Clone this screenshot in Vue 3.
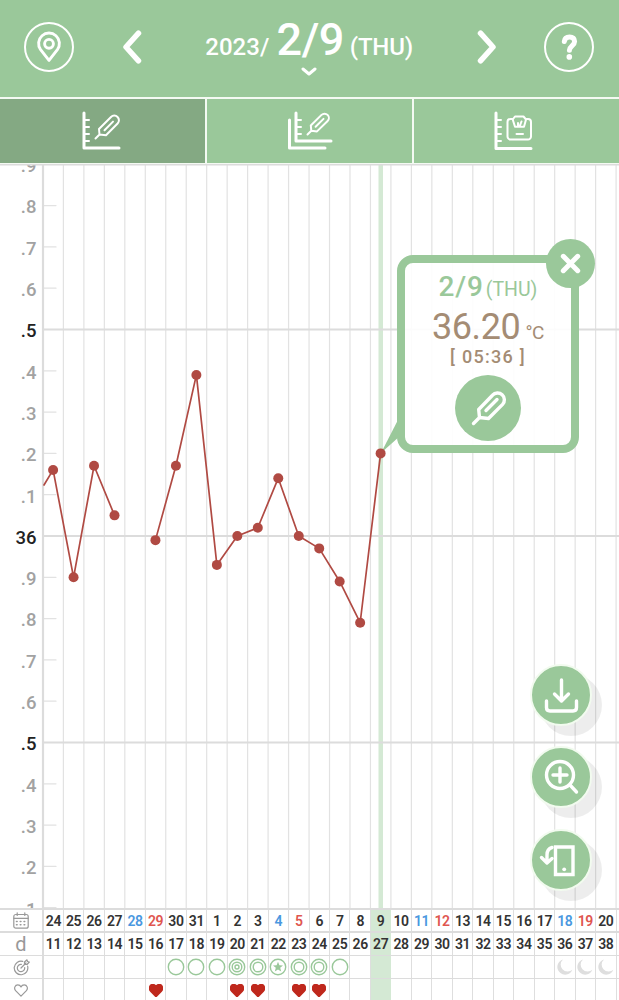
<template>
  <div class="app">
    <header class="header">
      <button class="round-btn">
        <svg width="50" height="50" viewBox="0 0 50 50">
          <circle cx="25" cy="25" r="24" />
          <path class="thick" d="M25 38.4 L16.6 27.6 A10.4 10.4 0 1 1 33.4 27.6 Z" />
          <circle class="thick" cx="25" cy="21.8" r="4.4" />
        </svg>
      </button>
      <button class="arrow">
        <svg width="20" height="34" viewBox="0 0 20 34"><path d="M16.5 3.2 L4 17 L16.5 30.8" /></svg>
      </button>
      <div class="date">
        <div class="date-text">
          <span class="year">2023/</span><span class="day">2/9</span><span class="week">(THU)</span>
        </div>
        <svg class="chevron" width="16" height="9" viewBox="0 0 16 9"><path d="M2 2 L8 7 L14 2" /></svg>
      </div>
      <button class="arrow">
        <svg width="20" height="34" viewBox="0 0 20 34"><path d="M3.5 3.2 L16 17 L3.5 30.8" /></svg>
      </button>
      <button class="round-btn">
        <svg width="50" height="50" viewBox="0 0 50 50">
          <circle cx="25" cy="25" r="24" />
          <path class="mark" d="M20.3 19.4 C20.6 16.3 22.8 14.9 25.6 14.9 C28.8 14.9 30.6 16.8 30.6 19.4 C30.6 23.6 25.4 24 25.4 28.2" />
          <circle class="dot" cx="25.3" cy="34.9" r="2.8" />
        </svg>
      </button>
    </header>

    <nav class="tabs">
      <button
        v-for="tab in tabs"
        :key="tab"
        class="tab"
        :class="[tab, { active: tab === activeTab }]"
        @click="activeTab = tab"
      >
        <svg v-if="tab === 'temp'" width="42" height="42" viewBox="0 0 42 42">
          <path class="axis" d="M4 3 V38 H39" />
          <path d="M5 10 H9 M5 17 H9 M5 24 H9 M5 31 H9" />
          <path d="M15.5 28.5 L19.5 24.5 L19 19 L31 7 A4.6 4.6 0 0 1 37.6 13.5 L26 25.2 L19.5 24.5 M24.5 20.2 L33 11.6" />
        </svg>
        <svg v-else-if="tab === 'multi'" width="46" height="42" viewBox="0 0 46 42">
          <path class="axis" d="M2.5 10 V38 H38" />
          <path class="axis" d="M9 3 V31 H44" />
          <path d="M10 10 H14 M10 17 H14 M10 24 H14" />
          <path d="M20.5 24.5 L24.3 20.7 L23.8 15.5 L34.5 4.9 A4.3 4.3 0 0 1 40.6 11 L30 21.4 L24.3 20.7 M28.6 16.7 L36.5 8.9" />
        </svg>
        <svg v-else width="42" height="42" viewBox="0 0 42 42">
          <path class="axis" d="M4 3 V38.5 H39" />
          <path d="M5 10 H9 M5 17 H9 M5 24 H9 M5 31 H9" />
          <path d="M20.5 9 H18.5 A3 3 0 0 0 15.5 12 V26.5 A3 3 0 0 0 18.5 29.5 H36 A3 3 0 0 0 39 26.5 V12 A3 3 0 0 0 36 9 H34" />
          <path d="M23 6.5 H31.5 L34 9.5 L32 16.8 H23 L20.7 9.5 Z M26 16 V13 M27.8 15.8 L29.5 11.5 M24.5 24 H31" />
        </svg>
      </button>
    </nav>

    <main class="chart">
      <svg width="619" height="745" viewBox="0 164 619 745">
        <rect class="today" x="378.5" y="164" width="4.5" height="745" />
        <line v-for="(d, i) in days" :key="'v' + i" class="grid" :x1="colX(i) + 10.3" :x2="colX(i) + 10.3" y1="164" y2="909" />
        <template v-for="s in scale" :key="s.y">
          <line :class="s.major ? 'grid-major' : 'grid'" x1="44" :x2="s.major ? 619 : 56" :y1="s.y" :y2="s.y" />
          <text class="label" :class="{ major: s.major }" x="36.5" :y="s.y + 7.8">{{ s.text }}</text>
        </template>
        <line class="axis-line" x1="43" x2="43" y1="164" y2="909" />
        <line class="grid-major" x1="0" x2="619" y1="164.3" y2="164.3" />
        <polyline v-for="(line, i) in lines" :key="'l' + i" class="temp-line" :points="line" />
        <path class="tail" d="M381 453 L400 416 V436 Z" />
        <circle v-for="p in points" :key="p.x" class="temp-dot" :cx="p.x" :cy="p.y" r="5" />
      </svg>

      <section v-if="showPopup" class="popup">
        <div class="popup-date">2/9<small>(THU)</small></div>
        <div class="popup-temp">36.20<small>°C</small></div>
        <div class="popup-time">[ 05:36 ]</div>
        <button class="popup-edit">
          <svg width="66" height="66" viewBox="0 0 66 66">
            <path d="M18.5 48.5 L24.5 42.5 L23.7 34.5 L37.5 20.2 A6.6 6.6 0 0 1 47.6 29.4 L33.5 43.5 L24.5 42.5 M31 35.5 L42 24.5" />
          </svg>
        </button>
        <button class="popup-close" @click="showPopup = false">
          <svg width="49" height="49" viewBox="0 0 49 49"><path d="M17.3 17.3 L31.7 31.7 M31.7 17.3 L17.3 31.7" /></svg>
        </button>
      </section>

      <div class="fabs">
        <button class="fab">
          <svg width="60" height="60" viewBox="0 0 60 60">
            <path d="M30.5 15 V35.5 M23.5 29 L30.5 36 L37.5 29 M15.5 36 V42.5 Q15.5 46 19 46 H42 Q45.5 46 45.5 42.5 V36" />
          </svg>
        </button>
        <button class="fab">
          <svg width="60" height="60" viewBox="0 0 60 60">
            <circle cx="29" cy="28" r="13.5" />
            <path d="M39 38 L45.5 45 M29 21 V35 M22 28 H36" />
          </svg>
        </button>
        <button class="fab">
          <svg width="60" height="60" viewBox="0 0 60 60">
            <path class="phone" d="M24.5 17 H42 V44.5 H24.5 Z" />
            <circle class="dot" cx="33.2" cy="39.3" r="1.9" />
            <path d="M21 17.5 Q16 19 16 25 V32 M10.5 27.5 L16 33 L21 28.5" />
          </svg>
        </button>
      </div>
    </main>

    <section class="table">
      <div class="row thick-row">
        <div class="head">
          <svg width="16" height="17" viewBox="0 0 16 17">
            <rect x="0.8" y="2.5" width="14.4" height="13.7" rx="2" />
            <path d="M0.8 6.3 H15.2 M4.2 0.8 V3.5 M11.8 0.8 V3.5" />
            <path class="dots" d="M3.5 9.5 H13 M3.5 12.7 H13" />
          </svg>
        </div>
        <div v-for="(d, i) in days" :key="i" class="cell" :class="[d.type, { current: i === today }]">{{ d.date }}</div>
      </div>
      <div class="row">
        <div class="head letter">d</div>
        <div v-for="(d, i) in days" :key="i" class="cell" :class="{ current: i === today }">{{ i + 11 }}</div>
      </div>
      <div class="row">
        <div class="head">
          <svg width="17" height="17" viewBox="0 0 17 17">
            <path d="M9.8 2.4 A6.8 6.8 0 1 0 14.6 7.2 M8.4 5.3 A3.7 3.7 0 1 0 11.7 8.6 M8 9 L13 4 M11.5 5.5 V3 L14 0.8 L14.5 2.5 L16.3 3 L14 5.5 Z" />
          </svg>
        </div>
        <div v-for="(d, i) in days" :key="i" class="cell" :class="{ current: i === today }">
          <svg v-if="d.mark" class="mark" width="18" height="18" viewBox="0 0 18 18">
            <template v-if="d.mark === 'moon'">
              <path class="moon" d="M7 1.4 A7.8 7.8 0 1 0 16.4 11.8 A6.2 6.2 0 0 1 7 1.4 Z" />
            </template>
            <template v-else>
              <circle cx="9" cy="9" r="7.7" />
              <circle v-if="d.mark === 'double' || d.mark === 'triple'" cx="9" cy="9" r="4.8" />
              <circle v-if="d.mark === 'triple'" cx="9" cy="9" r="2" />
              <path v-if="d.mark === 'star'" class="star" d="M9 3.8 L10.4 7.3 L14 7.5 L11.2 9.8 L12.2 13.4 L9 11.4 L5.8 13.4 L6.8 9.8 L4 7.5 L7.6 7.3 Z" />
            </template>
          </svg>
        </div>
      </div>
      <div class="row">
        <div class="head">
          <svg width="14" height="13" viewBox="0 0 14 13"><path :d="heart" /></svg>
        </div>
        <div v-for="(d, i) in days" :key="i" class="cell" :class="{ current: i === today }">
          <svg v-if="d.heart" class="heart" width="14" height="13" viewBox="0 0 14 13"><path :d="heart" /></svg>
        </div>
      </div>
    </section>
  </div>
</template>

<script setup>
import { ref, computed } from 'vue';

const tabs = ['temp', 'multi', 'weight'];
const activeTab = ref('temp');
const showPopup = ref(true);
const today = 16;

const heart = 'M7 12.2 L1.6 6.7 C-0.4 4.4 1 0.8 3.8 0.8 C5.6 0.8 6.6 2 7 2.9 C7.4 2 8.4 0.8 10.2 0.8 C13 0.8 14.4 4.4 12.4 6.7 Z';

// null = not measured on that day
const temps = [
  36.16, 35.9, 36.17, 36.05, null, 35.99, 36.17, 36.39, 35.93,
  36.0, 36.02, 36.14, 36.0, 35.97, 35.89, 35.79, 36.2
];

const marks = {
  6: 'single', 7: 'single', 8: 'single', 9: 'triple', 10: 'double',
  11: 'star', 12: 'double', 13: 'double', 14: 'single',
  25: 'moon', 26: 'moon', 27: 'moon'
};
const hearts = [5, 9, 10, 12, 13];

const days = Array.from({ length: 28 }, (_, i) => ({
  date: i < 8 ? 24 + i : i - 7,
  type: i % 7 === 4 ? 'sat' : i % 7 === 5 ? 'sun' : '',
  mark: marks[i],
  heart: hearts.includes(i)
}));

const colX = (i) => 53.1 + i * 20.47;
const tempY = (t) => 536 - (t - 36) * 413;

// Labels from 36.9 down to 35.1
const scale = Array.from({ length: 19 }, (_, i) => {
  const tenths = 369 - i;
  return {
    y: tempY(tenths / 10),
    major: tenths % 5 === 0,
    text: tenths === 360 ? '36' : '.' + (tenths % 10)
  };
});

const points = computed(() =>
  temps.map((t, i) => ({ x: colX(i), y: tempY(t), t })).filter((p) => p.t !== null)
);

// Break the line where a day is missing
const lines = computed(() => {
  const result = [['44,485']];
  temps.forEach((t, i) => {
    if (t === null) {
      result.push([]);
    } else {
      result[result.length - 1].push(`${colX(i)},${tempY(t)}`);
    }
  });
  return result.map((l) => l.join(' '));
});
</script>

<style>
body {
  margin: 0;
}
</style>

<style scoped>
.app {
  width: 619px;
  height: 1000px;
  overflow: hidden;
  display: flex;
  flex-direction: column;
  background: #fff;
  font-family: Roboto, "Liberation Sans", sans-serif;
}

.header,
.tabs,
.chart,
.table {
  flex: none;
}

button {
  padding: 0;
  border: 0;
  background: none;
  display: flex;
  align-items: center;
  justify-content: center;
}

svg {
  display: block;
  fill: none;
  stroke: #fff;
  stroke-width: 2;
  stroke-linecap: round;
  stroke-linejoin: round;
}

.header {
  height: 97px;
  box-sizing: border-box;
  padding: 0 25px 3px 24px;
  background: #9ac89a;
  display: flex;
  align-items: center;
  justify-content: space-between;
  color: #fff;
}

.thick {
  stroke-width: 2.9;
}

.header .mark {
  stroke-width: 5;
}

.dot {
  fill: #fff;
  stroke: none;
}

.arrow svg {
  stroke-width: 5.5;
}

.date {
  width: 240px;
  height: 94px;
  display: flex;
  flex-direction: column;
  align-items: center;
}

.date-text {
  height: 65px;
  padding-top: 2px;
  box-sizing: border-box;
  display: flex;
  align-items: baseline;
  font-weight: 500;
  line-height: 75px;
}

.year {
  font-size: 24px;
  letter-spacing: 0.1px;
  margin-right: 7px;
}

.day {
  font-size: 45px;
  letter-spacing: -0.5px;
}

.week {
  font-size: 24px;
  letter-spacing: -0.2px;
  margin-left: 6px;
}

.chevron {
  margin-top: 2px;
  stroke-width: 3;
}

.tabs {
  height: 67px;
  display: flex;
  gap: 2px;
  padding: 1.5px 0 1px;
  box-sizing: border-box;
  background: #f4faf3;
}

.tab {
  flex: none;
  width: calc((100% - 4px) / 3);
  box-sizing: border-box;
  padding-top: 1px;
  background: #9ac89a;
}

.tab.temp {
  padding-right: 3px;
}

.tab.weight {
  padding-right: 8px;
}

.tab.active {
  background: #84a983;
}

.tab .axis {
  stroke-width: 3;
}

.chart {
  position: relative;
  height: 745px;
}

.grid {
  stroke: #e2e2e2;
  stroke-width: 1.2;
}

.grid-major {
  stroke: #dcdcdc;
  stroke-width: 2.2;
}

.axis-line {
  stroke: #dcdcdc;
  stroke-width: 2.2;
}

.today {
  fill: #d4e9d4;
  stroke: none;
}

.label {
  fill: #a2a2a2;
  stroke: none;
  font-size: 18.5px;
  font-weight: 500;
  text-anchor: end;
}

.label.major {
  fill: #222;
}

.temp-line {
  stroke: #b04a43;
  stroke-width: 1.7;
}

.temp-dot {
  fill: #b04a43;
  stroke: none;
}

.tail {
  fill: #9ac89a;
  stroke: none;
}

.popup {
  position: absolute;
  left: 397px;
  top: 91px;
  width: 182px;
  height: 198px;
  box-sizing: border-box;
  border: 8px solid #9ac89a;
  border-radius: 16px;
  background: rgba(255, 255, 255, 0.9);
  display: flex;
  flex-direction: column;
  align-items: center;
  color: #a48c74;
}

.popup-date {
  margin-top: 8px;
  line-height: 32px;
  font-size: 28px;
  font-weight: 500;
  letter-spacing: 0.8px;
  color: #9ac89a;
}

.popup-date small {
  margin-left: 2px;
  font-size: 19.5px;
  font-weight: 400;
  letter-spacing: 0;
}

.popup-temp {
  margin-top: 1.5px;
  line-height: 38px;
  font-size: 36px;
  letter-spacing: -0.4px;
}

.popup-temp small {
  margin-left: 5px;
  font-size: 19px;
}

.popup-time {
  margin-top: -5px;
  line-height: 20px;
  font-size: 18px;
  font-weight: 500;
  letter-spacing: 1.3px;
}

.popup-edit {
  width: 66px;
  height: 66px;
  margin-top: 8.5px;
  border-radius: 50%;
  background: #9ac89a;
}

.popup-edit svg {
  stroke-width: 3.4;
}

.popup-close {
  position: absolute;
  right: -24px;
  top: -24.5px;
  width: 49px;
  height: 49px;
  border-radius: 50%;
  background: #9ac89a;
}

.popup-close svg {
  stroke-width: 5;
}

.fabs {
  position: absolute;
  left: 530px;
  top: 499.5px;
  display: flex;
  flex-direction: column;
  gap: 20.5px;
}

.fab {
  width: 62px;
  height: 62px;
  border-radius: 50%;
  border: 2px solid #f2fbef;
  box-sizing: border-box;
  background: #9ac89a;
  box-shadow: 10px 10px 0 rgba(0, 0, 0, 0.07);
}

.fab svg {
  flex: none;
  stroke-width: 3.4;
}

.fab .phone {
  stroke-linejoin: miter;
}

.table {
  border-top: 2px solid #dcdcdc;
  margin-top: -1px;
  position: relative;
  background: #fff;
}

.row {
  display: flex;
  height: 23px;
  box-sizing: border-box;
  border-bottom: 1px solid #dcdcdc;
}

.thick-row {
  border-bottom-width: 2px;
}

.head {
  flex: none;
  width: 44px;
  box-sizing: border-box;
  border-right: 2px solid #dcdcdc;
  display: flex;
  align-items: center;
  justify-content: center;
}

.head svg {
  stroke: #999;
  stroke-width: 1.2;
}

.head .dots {
  stroke-dasharray: 0.6 3.2;
  stroke-width: 1.6;
}

.letter {
  color: #999;
  font-size: 20px;
}

.cell {
  flex: none;
  width: 20.47px;
  box-sizing: border-box;
  border-right: 1px solid #dedede;
  display: flex;
  align-items: center;
  justify-content: center;
  font-size: 14px;
  font-weight: 600;
  letter-spacing: -0.4px;
  color: #333;
}

.head + .cell {
  width: 19.9px;
}

.cell svg {
  flex: none;
}

.cell.current {
  background: #d4e9d4;
  border-color: #d4e9d4;
}

.cell.sat {
  color: #4a98e0;
}

.cell.sun {
  color: #e0564f;
}

.cell .mark {
  stroke: #9ac89a;
  stroke-width: 1.4;
}

.cell .star {
  fill: #9ac89a;
  stroke: none;
}

.cell .moon {
  fill: #dedede;
  stroke: none;
}

.heart path {
  fill: #bf281c;
  stroke: #bf281c;
}
</style>
